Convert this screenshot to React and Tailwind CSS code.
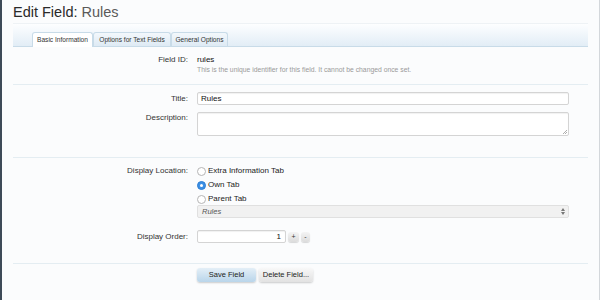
import React from "react";

function Radio({ checked, label }) {
  return (
    <div className="flex items-center h-[14px]">
      {checked ? (
        <span className="w-[9px] h-[9px] rounded-full bg-[#3b8fe5] border border-[#2f7fd3] flex items-center justify-center">
          <span className="w-[3px] h-[3px] rounded-full bg-white" />
        </span>
      ) : (
        <span className="w-[9px] h-[9px] rounded-full bg-white border border-[#b5b5b5]" />
      )}
      <span className="ml-[2px] text-[8px] leading-[10px] text-[#222]">{label}</span>
    </div>
  );
}

export default function App() {
  return (
    <div className="w-[600px] h-[300px] bg-[#fbfcfd] border-l-2 border-l-[#3e4b58] border-r border-r-[#d3d7db] pl-[11px] pr-[11px] font-['Liberation_Sans',Arial,sans-serif] overflow-hidden">
      <h1 className="h-[24px] pt-[3px] text-[14.5px] leading-[18px] text-[#2a2a2a] border-b border-[#eef2f5]">
        Edit Field: <span className="text-[#5a5a5a]">Rules</span>
      </h1>

      <div className="h-[23px] border-b border-[#c8dbe8] bg-gradient-to-b from-[#fdfeff] to-[#e2edf6] flex items-end pl-[19px]">
        <div className="w-[61px] h-[15px] -mb-px bg-white border border-b-0 border-[#c8dbe8] rounded-t-[3px] flex items-center justify-center text-[6.6px] text-[#333]">
          Basic Information
        </div>
        <div className="w-[78px] h-[14px] bg-gradient-to-b from-[#f3f8fc] to-[#deeaf4] border border-b-0 border-[#c8dbe8] rounded-t-[3px] flex items-center justify-center text-[6.6px] text-[#333]">
          Options for Text Fields
        </div>
        <div className="w-[57px] h-[14px] bg-gradient-to-b from-[#f3f8fc] to-[#deeaf4] border border-b-0 border-[#c8dbe8] rounded-t-[3px] flex items-center justify-center text-[6.6px] text-[#333]">
          General Options
        </div>
      </div>

      {/* Section 1 */}
      <div className="pt-[8px] pb-[10px] border-b border-[#e4edf2] flex">
        <div className="w-[175px] text-right text-[8px] leading-[10px] text-[#333]">Field ID:</div>
        <div className="pl-[9px]">
          <div className="text-[8px] leading-[10px] text-[#111]">rules</div>
          <div className="text-[6.8px] leading-[9px] text-[#9a9a9a]">
            This is the unique identifier for this field. It cannot be changed once set.
          </div>
        </div>
      </div>

      {/* Section 2 */}
      <div className="pt-[7px] pb-[21px] border-b border-[#e4edf2] flex flex-col gap-[7px]">
        <div className="flex">
          <div className="w-[175px] text-right text-[8px] leading-[13px] text-[#333]">Title:</div>
          <div className="pl-[9px]">
            <div className="w-[372px] h-[13px] bg-white border border-[#d4d4d4] rounded-[2px] shadow-[inset_0_1px_1px_rgba(0,0,0,0.06)] px-[3px] text-[8px] leading-[11px] text-[#111]">
              Rules
            </div>
          </div>
        </div>
        <div className="flex">
          <div className="w-[175px] pt-[1px] text-right text-[8px] leading-[10px] text-[#333]">Description:</div>
          <div className="pl-[9px]">
            <div className="relative w-[372px] h-[24px] bg-white border border-[#d4d4d4] rounded-[2px] shadow-[inset_0_1px_1px_rgba(0,0,0,0.06)]">
              <svg className="absolute right-[1px] bottom-[1px]" width="5" height="5" viewBox="0 0 5 5">
                <path d="M1 5 L5 1 M3 5 L5 3" stroke="#999" strokeWidth="0.8" />
              </svg>
            </div>
          </div>
        </div>
      </div>

      {/* Section 3 */}
      <div className="pt-[6px] pb-[20px] border-b border-[#e4edf2] flex flex-col">
        <div className="flex">
          <div className="w-[175px] text-right text-[8px] leading-[14px] text-[#333]">Display Location:</div>
          <div className="pl-[9px] flex flex-col">
            <Radio label="Extra Information Tab" />
            <Radio checked label="Own Tab" />
            <Radio label="Parent Tab" />
            <div className="-mt-px w-[372px] h-[13px] bg-[#f1f1f1] border border-[#e0e0e0] rounded-[2px] flex items-center justify-between pl-[4px] pr-[3px]">
              <span className="text-[7.5px] italic text-[#555]">Rules</span>
              <svg width="4" height="7" viewBox="0 0 4 7">
                <path d="M0 3 L2 0 L4 3 Z M0 4 L2 7 L4 4 Z" fill="#777" />
              </svg>
            </div>
          </div>
        </div>
        <div className="flex mt-[12px]">
          <div className="w-[175px] text-right text-[8px] leading-[13px] text-[#333]">Display Order:</div>
          <div className="pl-[9px] flex items-center">
            <div className="w-[89px] h-[13px] bg-white border border-[#d4d4d4] rounded-[2px] shadow-[inset_0_1px_1px_rgba(0,0,0,0.06)] px-[4px] text-right text-[8px] leading-[11px] text-[#111]">
              1
            </div>
            <div className="ml-[2px] w-[11px] h-[10px] rounded-[3px] bg-gradient-to-b from-[#f4f4f4] to-[#dcdcdc] shadow-[0_1px_1px_rgba(0,0,0,0.15)] flex items-center justify-center text-[7px] leading-none text-[#333]">
              +
            </div>
            <div className="ml-[2px] w-[9px] h-[10px] rounded-[3px] bg-gradient-to-b from-[#f4f4f4] to-[#dcdcdc] shadow-[0_1px_1px_rgba(0,0,0,0.15)] flex items-center justify-center text-[7px] leading-none text-[#333]">
              -
            </div>
          </div>
        </div>
      </div>

      {/* Buttons */}
      <div className="pt-[4px] pl-[184px] flex gap-[3px]">
        <div className="w-[59px] h-[14px] rounded-[3px] bg-gradient-to-b from-[#e4eff7] to-[#b9d5ea] shadow-[0_1px_2px_rgba(0,0,0,0.2)] flex items-center justify-center text-[7.5px] text-[#222]">
          Save Field
        </div>
        <div className="w-[54px] h-[14px] rounded-[3px] bg-gradient-to-b from-[#f8f8f8] to-[#e2e2e2] shadow-[0_1px_2px_rgba(0,0,0,0.2)] flex items-center justify-center text-[7.5px] text-[#222]">
          Delete Field...
        </div>
      </div>
    </div>
  );
}
